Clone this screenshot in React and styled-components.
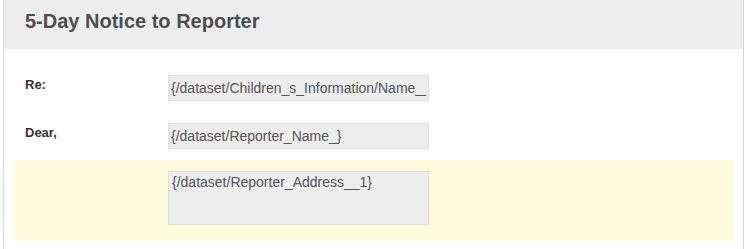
import React from 'react';
import styled, { createGlobalStyle } from 'styled-components';

const GlobalStyle = createGlobalStyle`
  html, body {
    margin: 0;
    padding: 0;
    background: #ffffff;
    font-family: "Liberation Sans", Arial, sans-serif;
  }
`;

const Page = styled.div`
  padding: 0 2px 0 3px;
`;

const Panel = styled.section`
  border-left: 1px solid #d4d4d4;
  border-right: 1px solid #d4d4d4;
  background: #fff;
  min-height: 249px;
`;

const PanelHeader = styled.header`
  height: 49px;
  background: #ededed;
  display: flex;
  align-items: center;
  padding: 0 21px;
`;

const PanelTitle = styled.h2`
  margin: 0;
  font-size: 20px;
  font-weight: 700;
  color: #4d4d4d;
  position: relative;
  top: -3px;
`;

const PanelBody = styled.div`
  padding: 15px 10px 0;
`;

const FormRow = styled.div`
  display: grid;
  grid-template-columns: 143px 261px;
  align-items: start;
  padding: 11px 11px ${p => (p.$tall ? '16px' : '11px')};
  background: ${p => (p.$highlight ? '#fffadc' : 'transparent')};
`;

const Label = styled.label`
  font-size: 13px;
  font-weight: 700;
  line-height: 15px;
  color: #333;
  padding-top: 2px;
`;

const Field = styled.input`
  box-sizing: border-box;
  width: 261px;
  height: 26px;
  margin: 0;
  padding: 0 2px;
  border: 1px solid #dedede;
  background: #ededed;
  font-family: "Liberation Sans", Arial, sans-serif;
  font-size: 14px;
  color: #555;
  outline: none;
`;

const Area = styled.textarea`
  box-sizing: border-box;
  width: 261px;
  height: 54px;
  margin: 0;
  padding: 2px 3px;
  border: 1px solid #dedede;
  background: #ededed;
  font-family: "Liberation Sans", Arial, sans-serif;
  font-size: 14px;
  line-height: 17px;
  color: #555;
  resize: none;
  outline: none;
  display: block;
`;

const App = () => {
  return (
    <Page>
      <GlobalStyle />
      <Panel>
        <PanelHeader>
          <PanelTitle>5-Day Notice to Reporter</PanelTitle>
        </PanelHeader>
        <PanelBody>
          <FormRow>
            <Label>Re:</Label>
            <Field readOnly value="{/dataset/Children_s_Information/Name__}" />
          </FormRow>
          <FormRow>
            <Label>Dear,</Label>
            <Field readOnly value="{/dataset/Reporter_Name_}" />
          </FormRow>
          <FormRow $highlight $tall>
            <Label />
            <Area readOnly value="{/dataset/Reporter_Address__1}" />
          </FormRow>
        </PanelBody>
      </Panel>
    </Page>
  );
};

export default App;
